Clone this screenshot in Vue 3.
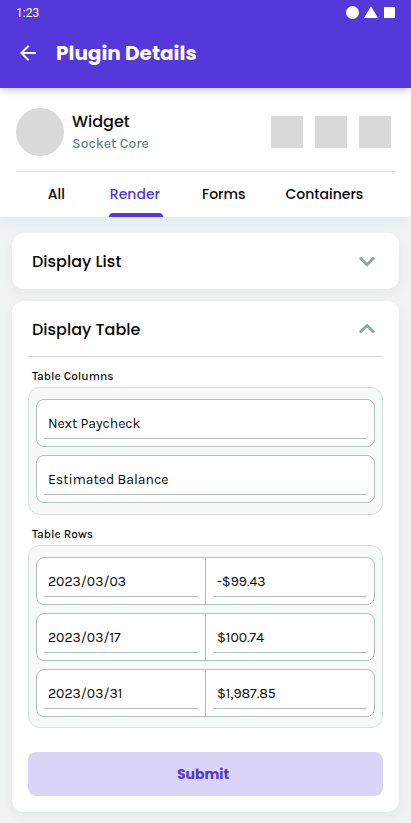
<script setup>
import { ref } from 'vue'

const tabs = ['All', 'Render', 'Forms', 'Containers']
const activeTab = ref('Render')
const columns = ['Next Paycheck', 'Estimated Balance']
const rows = [
  ['2023/03/03', '-$99.43'],
  ['2023/03/17', '$100.74'],
  ['2023/03/31', '$1,987.85']
]
</script>

<template>
  <div class="screen">
    <header class="app-bar">
      <div class="status">
        <span class="clock">1:23</span>
        <svg class="status-icons" width="50" height="14" viewBox="0 0 50 14" fill="#fff">
          <circle cx="7.5" cy="6.5" r="6.5" />
          <path d="M26 .3 33 12H19z" />
          <path d="M39 1h11v11H39z" />
        </svg>
      </div>
      <div class="title-row">
        <svg width="24" height="24" viewBox="0 0 24 24" fill="#fff">
          <path d="M20 11H7.83l5.59-5.59L12 4l-8 8 8 8 1.41-1.41L7.83 13H20v-2z" />
        </svg>
        <h1>Plugin Details</h1>
      </div>
    </header>

    <section class="summary">
      <div class="profile">
        <div class="avatar"></div>
        <div class="names">
          <strong>Widget</strong>
          <span>Socket Core</span>
        </div>
        <div class="actions"><i></i><i></i><i></i></div>
      </div>
      <nav class="tabs">
        <button v-for="tab in tabs" :key="tab" class="tab" :class="{ active: tab === activeTab }" @click="activeTab = tab">
          {{ tab }}
        </button>
      </nav>
    </section>

    <main class="content">
      <section class="card">
        <div class="card-head">
          <h2>Display List</h2>
          <svg width="24" height="24" viewBox="0 0 24 24" fill="none" stroke="#8fa3a3" stroke-width="2.8">
            <path d="m5 8.7 7 7 7-7" />
          </svg>
        </div>
      </section>

      <section class="card">
        <div class="card-head open">
          <h2>Display Table</h2>
          <svg width="24" height="24" viewBox="0 0 24 24" fill="none" stroke="#8fa3a3" stroke-width="2.8">
            <path d="m5 15.5 7-7 7 7" />
          </svg>
        </div>
        <h3>Table Columns</h3>
        <div class="group">
          <div v-for="name in columns" :key="name" class="entry">
            <div class="cell"><span>{{ name }}</span></div>
          </div>
        </div>
        <h3>Table Rows</h3>
        <div class="group rows">
          <div v-for="row in rows" :key="row[0]" class="entry">
            <div v-for="value in row" :key="value" class="cell"><span>{{ value }}</span></div>
          </div>
        </div>
        <button class="submit">Submit</button>
      </section>
    </main>
  </div>
</template>

<style>
body {
  background: #eff3f4;
}
</style>

<style scoped>
* {
  box-sizing: border-box;
}
.screen {
  height: 823px;
  overflow: hidden;
  display: flex;
  flex-direction: column;
  background: #eff3f4;
  color: #080a0a;
  font-family: Karla, Inter, sans-serif;
}
h1, h2, h3 {
  margin: 0;
}
button {
  border: 0;
  padding: 0;
  background: none;
}
.app-bar {
  position: relative;
  z-index: 2;
  height: 88px;
  flex: none;
  background: #5438da;
  color: #fff;
  box-shadow: 0 5px 7px -2px rgba(0, 0, 0, 0.2);
}
.status {
  height: 24px;
  padding: 6px 16px 0;
  display: flex;
  justify-content: space-between;
}
.clock {
  font: 400 12px/14px Roboto, sans-serif;
}
.title-row {
  display: flex;
  align-items: center;
  gap: 16px;
  height: 58px;
  padding-left: 16px;
}
h1 {
  font: 700 20px/30px Poppins, Inter, sans-serif;
}
.summary {
  position: relative;
  z-index: 1;
  flex: none;
  height: 129px;
  background: #fff;
  box-shadow: 0 4px 12px rgba(16, 40, 40, 0.05);
}
.profile {
  display: flex;
  align-items: center;
  height: 84px;
  margin: 0 16px;
  padding: 4px 4px 0 0;
  border-bottom: 1px solid #e0e3e3;
}
.avatar {
  width: 48px;
  height: 48px;
  border-radius: 50%;
  background: #d9d9d9;
}
.names {
  flex: 1;
  display: flex;
  flex-direction: column;
  padding-left: 8px;
}
.names strong {
  font: 500 16px/24px Poppins, Inter, sans-serif;
}
.names span {
  font-size: 14px;
  font-weight: 500;
  line-height: 20px;
  color: #68837f;
}
.actions {
  display: flex;
  gap: 12px;
}
.actions i {
  width: 32px;
  height: 32px;
  background: #d9d9d9;
}
.tabs {
  display: flex;
  justify-content: center;
  gap: 37px;
  height: 45px;
}
.tab {
  position: relative;
  padding: 0 2px;
  color: #080a0a;
  font: 500 14px/45px Poppins, Inter, sans-serif;
}
.tab:first-child {
  margin-right: 4px;
}
.tab:nth-child(3) {
  margin-left: 1px;
  margin-right: -1px;
}
.tab.active {
  color: #5438da;
}
.tab.active::after {
  content: "";
  position: absolute;
  left: 1px;
  right: -1px;
  bottom: 0;
  height: 4px;
  border-radius: 4px 4px 0 0;
  background: #5438da;
}
.content {
  display: flex;
  flex-direction: column;
  gap: 12px;
  padding: 16px 12px 0;
}
.card {
  padding: 0 16px;
  border-radius: 12px;
  background: #fff;
  box-shadow: 0 4px 12px rgba(16, 40, 40, 0.05);
}
.card-head {
  display: flex;
  align-items: center;
  justify-content: space-between;
  height: 56px;
  padding: 0 4px;
}
.card-head.open {
  border-bottom: 1px solid #d5d9d9;
}
h2 {
  padding-top: 2px;
  font: 500 16px/24px Poppins, Inter, sans-serif;
}
h3 {
  padding: 12px 4px 4px;
  font: 500 12px/14px Karla, Inter, sans-serif;
}
.group {
  display: flex;
  flex-direction: column;
  gap: 8px;
  padding: 11px 7px;
  border: 1px solid #d6dfdd;
  border-radius: 12px;
  background: #f7f9f8;
}
.group.rows {
  padding-bottom: 10px;
}
.entry {
  display: flex;
  height: 48px;
  border: 1px solid #afc0bd;
  border-radius: 8px;
  background: #fff;
}
.cell {
  flex: 1;
  padding: 7px;
}
.cell + .cell {
  border-left: 1px solid #afc0bd;
}
.cell span {
  display: block;
  height: 32px;
  padding-left: 4px;
  border-bottom: 1px solid #afc0bd;
  font-size: 14px;
  line-height: 33px;
}
.submit {
  display: block;
  width: 100%;
  height: 44px;
  margin: 24px 0 0;
  padding-right: 5px;
  border-radius: 8px;
  background: #dad4f6;
  color: #5438da;
  font: 700 14px/44px Poppins, Inter, sans-serif;
}
.card:last-child {
  padding-bottom: 16px;
}
</style>
